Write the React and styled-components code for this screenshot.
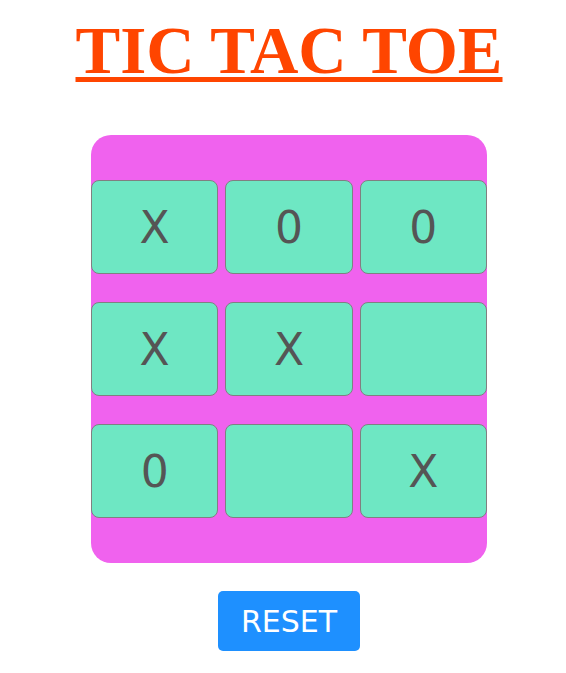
import React, { useState } from "react";
import styled, { createGlobalStyle } from "styled-components";

const GlobalStyle = createGlobalStyle`
  body {
    margin: 0;
    background: #fff;
  }
`;

const Page = styled.div`
  width: 566px;
  padding-left: 12px;
  box-sizing: border-box;
  display: flex;
  flex-direction: column;
  align-items: center;
`;

const Title = styled.h1`
  margin: 10px 0 0;
  font-family: "Liberation Serif", "Times New Roman", serif;
  font-weight: bold;
  font-size: 67px;
  line-height: 80px;
  color: #ff4500;
  text-decoration: underline;
  text-decoration-thickness: 5px;
  text-underline-offset: 4px;
`;

const Board = styled.div`
  margin-top: 45px;
  width: 396px;
  box-sizing: border-box;
  padding: 45px 0;
  background: #f062ee;
  border-radius: 20px;
  display: grid;
  grid-template-columns: repeat(3, 1fr);
  column-gap: 7px;
  row-gap: 28px;
`;

const Cell = styled.button`
  height: 94px;
  background: #6ee7c3;
  border: 1px solid #808080;
  border-radius: 8px;
  font-family: "DejaVu Sans", Verdana, sans-serif;
  font-size: 44px;
  color: #555;
  padding: 0;
  cursor: pointer;
`;

const ResetButton = styled.button`
  margin-top: 28px;
  width: 142px;
  height: 60px;
  background: #1e90ff;
  color: #fff;
  border: none;
  border-radius: 5px;
  font-family: "DejaVu Sans", Verdana, sans-serif;
  font-size: 30px;
  cursor: pointer;
`;

const initial = ["X", "0", "0", "X", "X", "", "0", "", "X"];

export default function App() {
  const [cells, setCells] = useState(initial);

  return (
    <>
      <GlobalStyle />
      <Page>
        <Title>TIC TAC TOE</Title>
        <Board>
          {cells.map((v, i) => (
            <Cell key={i}>{v}</Cell>
          ))}
        </Board>
        <ResetButton onClick={() => setCells(Array(9).fill(""))}>RESET</ResetButton>
      </Page>
    </>
  );
}
